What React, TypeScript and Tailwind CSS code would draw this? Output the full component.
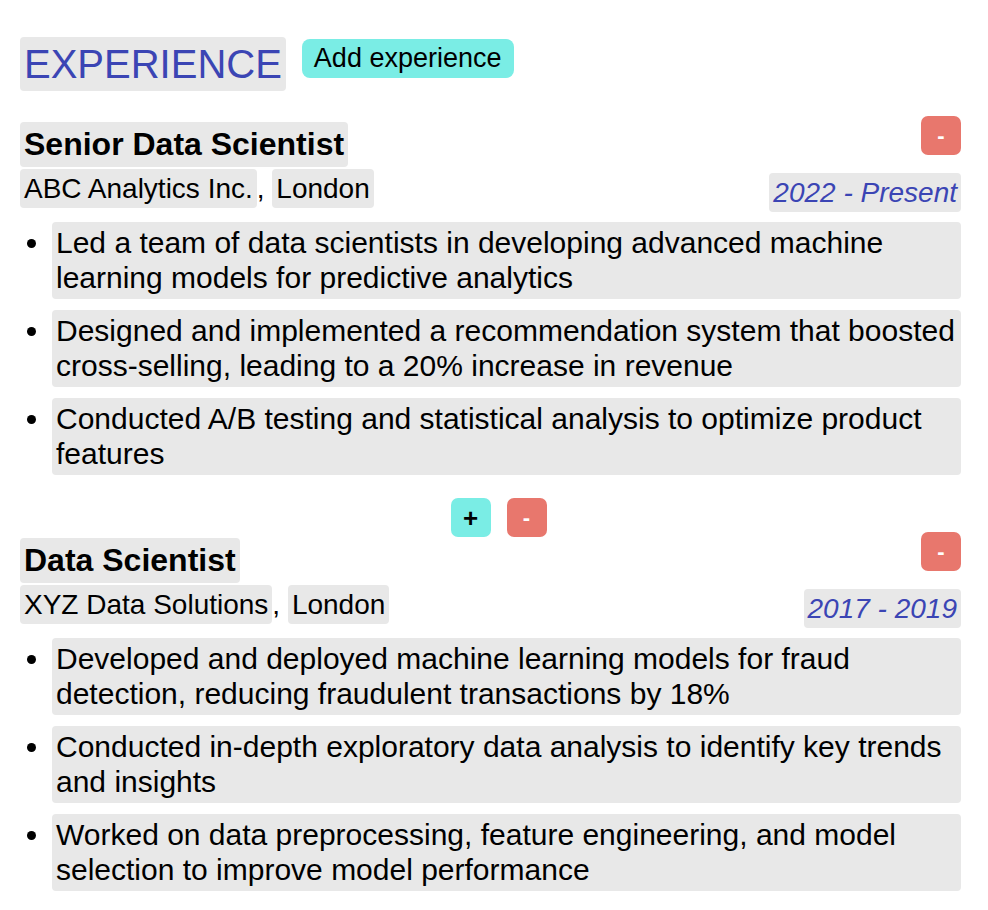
import React from 'react';

type Job = {
  title: string;
  company: string;
  location: string;
  dates: string;
  bullets: string[];
};

const jobs: Job[] = [
  {
    title: 'Senior Data Scientist',
    company: 'ABC Analytics Inc.',
    location: 'London',
    dates: '2022 - Present',
    bullets: [
      'Led a team of data scientists in developing advanced machine learning models for predictive analytics',
      'Designed and implemented a recommendation system that boosted cross-selling, leading to a 20% increase in revenue',
      'Conducted A/B testing and statistical analysis to optimize product features',
    ],
  },
  {
    title: 'Data Scientist',
    company: 'XYZ Data Solutions',
    location: 'London',
    dates: '2017 - 2019',
    bullets: [
      'Developed and deployed machine learning models for fraud detection, reducing fraudulent transactions by 18%',
      'Conducted in-depth exploratory data analysis to identify key trends and insights',
      'Worked on data preprocessing, feature engineering, and model selection to improve model performance',
    ],
  },
];

const field = 'bg-[#e8e8e8] rounded-[4px] px-[4px] py-[4px]';

const MinusButton: React.FC<{ className?: string }> = ({ className = '' }) => (
  <button
    className={`w-[40px] h-[39px] rounded-[7px] bg-[#e8776d] text-white text-[22px] font-bold leading-none flex items-center justify-center ${className}`}
  >
    -
  </button>
);

const JobBlock: React.FC<{ job: Job }> = ({ job }) => (
  <div>
    <div className="flex justify-between items-start">
      <span className={`${field} text-[32px] font-bold leading-[37px]`}>{job.title}</span>
      <MinusButton className="-mt-[6px]" />
    </div>
    <div className="flex justify-between items-start mt-[2px] text-[28px] leading-[31px]">
      <div className="flex items-start">
        <span className={field}>{job.company}</span>
        <span className="pt-[4px] whitespace-pre">, </span>
        <span className={field}>{job.location}</span>
      </div>
      <span className={`${field} mt-[4px] italic text-[#3b45b4]`}>{job.dates}</span>
    </div>
    <ul className="list-disc pl-[32px] mt-[10px] flex flex-col gap-[11px] text-[30px] leading-[34.5px]">
      {job.bullets.map((b) => (
        <li key={b}>
          <div className={field}>{b}</div>
        </li>
      ))}
    </ul>
  </div>
);

export default function App() {
  return (
    <div className="bg-white min-h-[910px] pl-[20px] pr-[27px] pt-[37px] text-black font-['Liberation_Sans',Arial,sans-serif]">
      <div className="flex items-start gap-[16px]">
        <h2 className={`${field} text-[40px] leading-[46px] text-[#3b45b4]`}>EXPERIENCE</h2>
        <button className="mt-[2px] bg-[#7aede5] rounded-[8px] px-[12px] h-[39px] text-[27px] leading-none">
          Add experience
        </button>
      </div>
      <div className="mt-[31px]">
        <JobBlock job={jobs[0]} />
        <div className="flex justify-center gap-[16px] pl-[16px] mt-[23px]">
          <button className="w-[40px] h-[39px] rounded-[7px] bg-[#7aede5] text-black text-[26px] font-bold leading-none flex items-center justify-center">
            +
          </button>
          <MinusButton />
        </div>
        <div className="mt-[1px]">
          <JobBlock job={jobs[1]} />
        </div>
      </div>
    </div>
  );
}
